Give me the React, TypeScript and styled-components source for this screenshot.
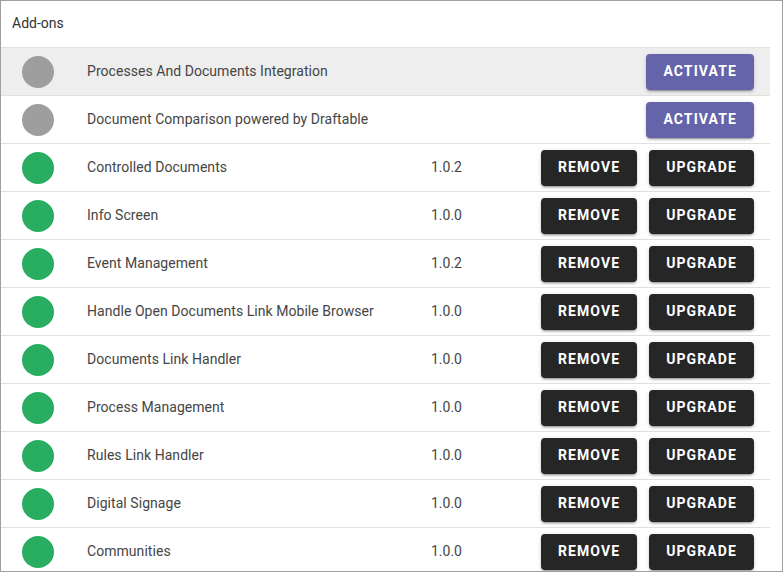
import React from "react";
import styled, { createGlobalStyle } from "styled-components";

const Global = createGlobalStyle`
  html, body { margin: 0; padding: 0; background: #fff; }
  body { font-family: Roboto, "Liberation Sans", sans-serif; }
  * { box-sizing: border-box; }
`;

const Frame = styled.div`
  width: 783px;
  height: 572px;
  border: 1px solid #a0a0a0;
  overflow: hidden;
  background: #fff;
  display: flex;
  flex-direction: column;
`;

const Header = styled.div`
  height: 46px;
  flex: none;
  display: flex;
  align-items: center;
  padding: 0 11px 2px;
  font-size: 14px;
  color: #333;
`;

const List = styled.div`
  margin-right: 12px;
  display: flex;
  flex-direction: column;
`;

const Row = styled.div<{ $hover?: boolean }>`
  flex: none;
  height: 48px;
  border-top: 1px solid #e0e0e0;
  background: ${(p) => (p.$hover ? "#eeeeee" : "#fff")};
  display: grid;
  grid-template-columns: 86px 344px 1fr auto;
  align-items: center;
  padding-right: 16px;
  font-size: 14px;
  color: #454545;
`;

const Dot = styled.span<{ $active: boolean }>`
  width: 32px;
  height: 32px;
  border-radius: 50%;
  margin-left: 21px;
  background: ${(p) => (p.$active ? "#27ae60" : "#9e9e9e")};
`;

const Name = styled.span`
  white-space: nowrap;
  margin-bottom: 2px;
  letter-spacing: 0.05px;
`;

const Version = styled.span`
  margin-bottom: 2px;
`;

const Actions = styled.div`
  display: flex;
  gap: 12px;
  justify-content: flex-end;
`;

const Button = styled.button<{ $variant: "primary" | "dark" }>`
  height: 36px;
  border: none;
  border-radius: 4px;
  padding: 0 17px 2px;
  font-family: Roboto, "Liberation Sans", sans-serif;
  font-weight: 700;
  font-size: 14px;
  letter-spacing: 1.1px;
  color: #fff;
  background: ${(p) => (p.$variant === "primary" ? "#6564aa" : "#262626")};
  box-shadow: 0 3px 1px -2px rgba(0, 0, 0, 0.2), 0 2px 2px 0 rgba(0, 0, 0, 0.14),
    0 1px 5px 0 rgba(0, 0, 0, 0.12);
  cursor: pointer;
`;

type Addon = { name: string; version?: string; installed: boolean };

const addons: Addon[] = [
  { name: "Processes And Documents Integration", installed: false },
  { name: "Document Comparison powered by Draftable", installed: false },
  { name: "Controlled Documents", version: "1.0.2", installed: true },
  { name: "Info Screen", version: "1.0.0", installed: true },
  { name: "Event Management", version: "1.0.2", installed: true },
  { name: "Handle Open Documents Link Mobile Browser", version: "1.0.0", installed: true },
  { name: "Documents Link Handler", version: "1.0.0", installed: true },
  { name: "Process Management", version: "1.0.0", installed: true },
  { name: "Rules Link Handler", version: "1.0.0", installed: true },
  { name: "Digital Signage", version: "1.0.0", installed: true },
  { name: "Communities", version: "1.0.0", installed: true },
];

export default function App() {
  return (
    <>
      <Global />
      <Frame>
        <Header>Add-ons</Header>
        <List>
          {addons.map((a, i) => (
            <Row key={a.name} $hover={i === 0}>
              <Dot $active={a.installed} />
              <Name>{a.name}</Name>
              <Version>{a.version ?? ""}</Version>
              <Actions>
                {a.installed ? (
                  <>
                    <Button $variant="dark">REMOVE</Button>
                    <Button $variant="dark">UPGRADE</Button>
                  </>
                ) : (
                  <Button $variant="primary">ACTIVATE</Button>
                )}
              </Actions>
            </Row>
          ))}
        </List>
      </Frame>
    </>
  );
}
